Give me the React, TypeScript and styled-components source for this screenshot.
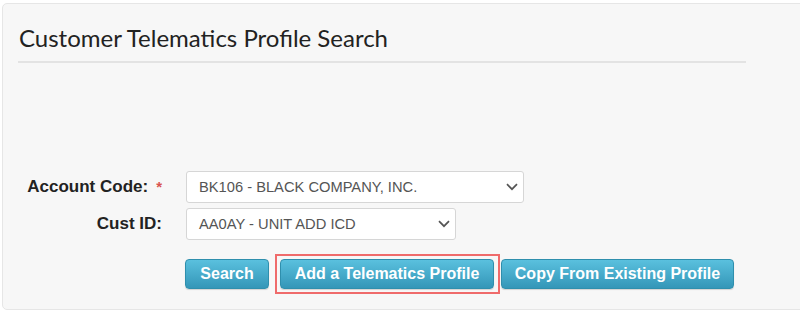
import React from "react";
import styled, { createGlobalStyle } from "styled-components";

const Global = createGlobalStyle`
  html, body { margin: 0; padding: 0; background: #ffffff; overflow: hidden; }
  body { font-family: "Liberation Sans", Arial, sans-serif; }
`;

const Panel = styled.div`
  margin: 3px 0 0 2px;
  width: 830px;
  height: 305px;
  box-sizing: content-box;
  background: #f7f7f7;
  border: 1px solid #e6e6e6;
  border-radius: 5px;
  padding: 0 0 0 15px;
  display: flex;
  flex-direction: column;
`;

const Header = styled.div`
  width: 727px;
  border-bottom: 2px solid #e3e3e3;
  padding: 21px 0 10px 1px;
`;

const Title = styled.h1`
  margin: 0;
  font-family: Lato, "Open Sans", sans-serif;
  font-weight: 400;
  font-size: 24px;
  line-height: 26px;
  color: #222;
`;

const Form = styled.div`
  margin-top: 108px;
  display: flex;
  flex-direction: column;
  gap: 5px;
`;

const Row = styled.div`
  display: flex;
  align-items: center;
`;

const Label = styled.label`
  width: 144px;
  text-align: right;
  font-weight: 700;
  font-size: 17px;
  color: #222;
  margin-right: 24px;
  white-space: nowrap;
`;

const Req = styled.span`
  color: #d9534f;
  font-size: 15px;
  margin-left: 8px;
`;

const SelectBox = styled.div<{ $w: number }>`
  width: ${(p) => p.$w}px;
  height: 32px;
  box-sizing: border-box;
  background: #fff;
  border: 1px solid #d6d6d6;
  border-radius: 3px;
  display: flex;
  align-items: center;
  justify-content: space-between;
  padding: 0 5px 0 12px;
  font-size: 14.7px;
  color: #555;
`;

const Chevron = () => (
  <svg width="12" height="8" viewBox="0 0 12 8" fill="none">
    <path d="M1 1.2 L6 6.2 L11 1.2" stroke="#555" strokeWidth="1.7" />
  </svg>
);

const Actions = styled.div`
  display: flex;
  align-items: center;
  margin-left: 167px;
  margin-top: 14px;
`;

const Button = styled.button`
  height: 30px;
  padding: 0 10px;
  border: 1px solid #2f8fad;
  border-radius: 4px;
  background: linear-gradient(#5ac0de, #3496b8);
  color: #fff;
  font-family: "Liberation Sans", Arial, sans-serif;
  font-weight: 700;
  font-size: 16px;
  box-shadow: 0 1px 1px rgba(0,0,0,0.15);
  cursor: pointer;
`;

const Highlight = styled.div`
  border: 2px solid #ef6b6b;
  padding: 3px 4px 3px 3px;
  margin: 0 1px 0 6px;
  display: flex;
`;

export default function App() {
  return (
    <>
      <Global />
      <Panel>
        <Header>
          <Title>Customer Telematics Profile Search</Title>
        </Header>
        <Form>
          <Row>
            <Label>
              Account Code:<Req>*</Req>
            </Label>
            <SelectBox $w={338}>
              <span>BK106 - BLACK COMPANY, INC.</span>
              <Chevron />
            </SelectBox>
          </Row>
          <Row>
            <Label>Cust ID:</Label>
            <SelectBox $w={270}>
              <span>AA0AY - UNIT ADD ICD</span>
              <Chevron />
            </SelectBox>
          </Row>
        </Form>
        <Actions>
          <Button style={{ width: 84 }}>Search</Button>
          <Highlight>
            <Button style={{ width: 214 }}>Add a Telematics Profile</Button>
          </Highlight>
          <Button style={{ width: 233 }}>Copy From Existing Profile</Button>
        </Actions>
      </Panel>
    </>
  );
}
